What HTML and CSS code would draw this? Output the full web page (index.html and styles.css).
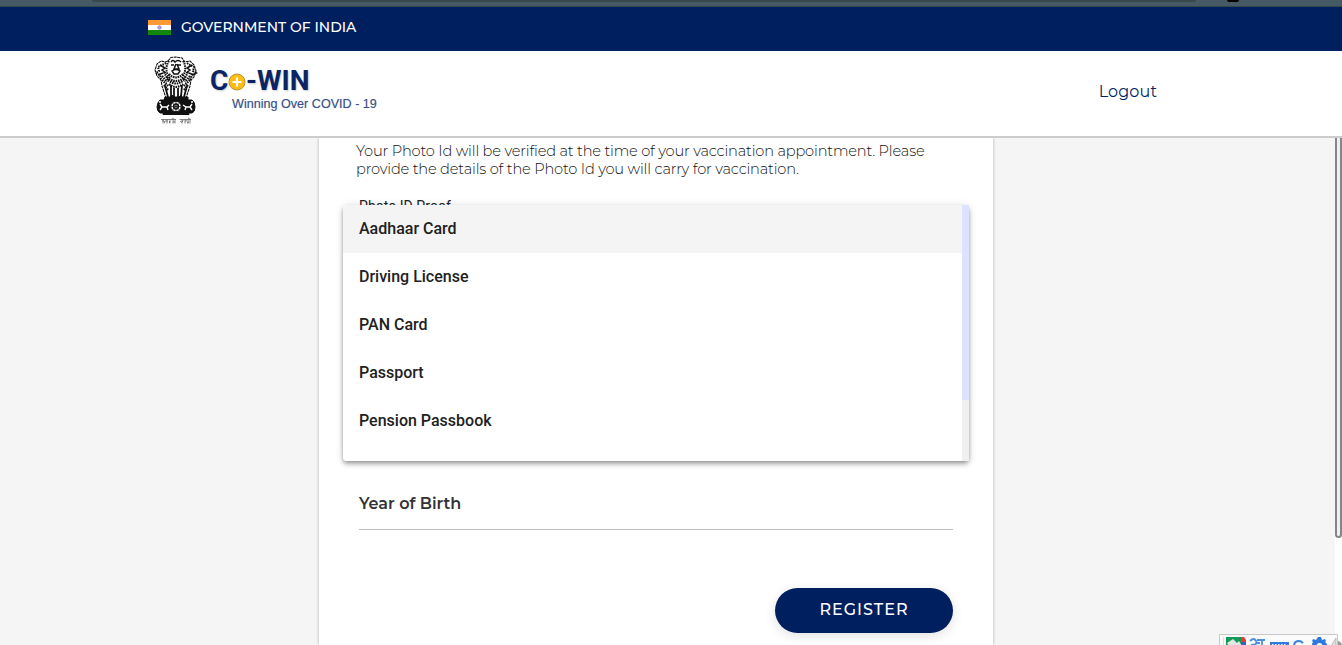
FILE: index.html
```html
<!DOCTYPE html>
<html lang="en">
<head>
<meta charset="utf-8">
<title>Co-WIN</title>
<link rel="stylesheet" href="styles.css">
</head>
<body>
<div class="page">
  <div class="browser-edge"><span class="address-bar"></span><span class="edge-mark"></span></div>
  <div class="gov-bar">
    <svg class="flag" width="23" height="15" viewBox="0 0 23 15"><path fill="#ff9933" d="M0 0h23v5H0z"/><path fill="#fff" d="M0 5h23v5H0z"/><path fill="#138808" d="M0 10h23v5H0z"/><circle cx="11.5" cy="7.5" r="1.8" fill="#a9a9dc" stroke="#7777bd" stroke-width=".6"/></svg>
    <span class="gov-label">GOVERNMENT OF INDIA</span>
  </div>
  <header class="header">
    <div class="brand">
      <svg class="emblem" width="44" height="70" viewBox="0 0 44 70" fill="none" stroke="#111" stroke-width="1">
        <path fill="#fff" stroke-width="1.1" stroke-dasharray="3 .6" d="M14 5 17 1.500 22 1 28 2 31 6 36 5 40 9 42 15 40 21 37 24 36 30 32 42H12L8 30 7 24 3 20 1 14 3 8 7 5 11 6z"/>
        <path stroke-width="2" stroke-dasharray="1.500 .9" d="M15 5C11 11 12 17 16 22M29 5c4 6 2 12-1 17M12 7 8 9l-4 2 1 4-3 2 4 2 1 4M33 7l3 2 4 2-1 4 3 2-4 2-2 5"/>
        <path stroke-width="1.500" d="M17 6q2-3 4 0 3-3 6 0M17 9h3M24 9h3M22 8l-2 5h5l-2-5M18 15q4-3 8 0l-2 3h-4zM6 9l5 3-3 2 4 3M38 9l-5 3 3 2-4 3M4 19l5-2M40 19l-5-2"/>
        <path stroke-width="2.200" stroke-dasharray="1.600 .8" d="M15 18q7 7 14 0M13 21q9 8 18 0M14 24q8 7 16 0M15 28q7 6 14 0M8 20l5 6M8 24l6 6M10 29l4 5M36 20l-5 6M36 24l-6 6M34 29l-4 5M10 16l4 8M34 16l-4 8"/>
        <path stroke-width="1.800" d="M11 30l3 11M17 29v12M20 32v9M24 32v9M28 29l-1 12M33 30l-3 11"/>
        <path fill="#111" d="M11 41h6l1-2 2 2h5l2-2 1 2h6v3H10z"/>
        <path fill="#111" d="M6 44h32q3 2 3 7t-3 6H6q-3-2-3-6t3-7z"/>
        <circle cx="22" cy="50.500" r="5.200" fill="#fff"/><circle cx="22" cy="50.500" r="2.400" stroke-width="1.500"/><path stroke-width=".7" d="M17 50.500h10M22 45.500v10M18.500 47l7 7M25.500 47l-7 7"/>
        <path stroke="#fff" stroke-width="1.400" d="M6 48l2 3h5l2-2M8 51l-2 3M13 51l1 3M29 49l3 2h4l2-3M32 51l-1 3M36 51l2 3M5 46h2M37 46h2"/>
        <path fill="#111" d="M9 57.500h26v1H9z"/>
        <g stroke="#555" stroke-width=".7"><path d="M7 63.500h15M25.500 63.500H37M9 63.500v4M8 65h2q2 1 0 2M13 63.500v4M11 65h3M16 63.500v4M16 65q-2 1 0 2M19 63.500v4M18 62l2 1M21 63.500v4M19 66h2M28 63.500v4M26 65q2 3 3-1M31 63.500v4M31 65h2M34 63.500v4M36 63.500v4M33 67l2-1M34 62l2 1"/></g>
      </svg>
      <div class="logo">
        <div class="logo-name"><span class="c">C</span><svg class="plus" width="18" height="18" viewBox="0 0 18 18"><circle cx="9" cy="9" r="8" fill="#fdbd12" stroke="#b9943d" stroke-width="1"/><path d="M9 4.500v9M4.500 9h9" stroke="#fff" stroke-width="2.200"/></svg><span class="win">-WIN</span></div>
        <div class="tagline">Winning Over COVID - 19</div>
      </div>
    </div>
    <a class="logout">Logout</a>
  </header>
  <main class="main">
    <section class="card">
      <p class="intro">Your Photo Id will be verified at the time of your vaccination appointment. Please<br>provide the details of the Photo Id you will carry for vaccination.</p>
      <div class="select-field">
        <label class="field-label">Photo ID Proof</label>
        <div class="options">
          <ul class="option-list"><li class="active">Aadhaar Card</li><li>Driving License</li><li>PAN Card</li><li>Passport</li><li>Pension Passbook</li></ul>
          <div class="options-track"><div class="options-thumb"></div></div>
        </div>
      </div>
      <div class="year-field"><span class="year-label">Year of Birth</span></div>
      <button class="register"><span>REGISTER</span></button>
    </section>
    <div class="page-track"><div class="page-thumb"></div></div>
  </main>
  <svg class="ime" width="123" height="12" viewBox="0 0 123 12">
    <path fill="#fbfbfb" stroke="#c9c9c9" d="M.5 13V.5h118V13"/><path stroke="#ddd" d="M4.500 3v9"/>
    <path fill="#109b58" d="M7 3h15v9H7z"/><path fill="#e33b32" d="M22 3h3l2 3v3h-5z"/><path fill="#2e65c8" d="M22 8h5v4h-5z"/><path fill="#e5e5e5" d="M8 9l6-4 4 4 2-2 3 5H10z"/>
    <path fill="none" stroke="#4a90dd" stroke-width="1.800" d="M31 7q4-4 6 0t-5 4M37 9h4M38 6h8M43 6v6"/>
    <path fill="#3179df" d="M51 8h19v4H51z"/><path stroke="#fff" stroke-dasharray="1.500 1.500" d="M53 10.500h15"/>
    <path fill="none" stroke="#3b83e1" stroke-width="2" d="M75 12q0-5 5-5 2 0 4 2"/>
    <path fill="#3179df" d="M94 8l-1-1 1-2 3 1 2-3h3l1 3 3-1 1 2-1 1 2 2v2H93v-2z"/><circle cx="100.500" cy="12" r="3" fill="#fff"/>
    <path fill="#ddd" stroke="#aaa" stroke-width=".7" d="M112 12l5-8v8z"/><path fill="#999" d="M119 7q4 1 4 5h-4z"/>
  </svg>
</div>
</body>
</html>
```
FILE: styles.css
```css
* { box-sizing: border-box; }
body { margin: 0; font-family: Montserrat, Inter, sans-serif; background: #f5f5f5; }
.page { position: relative; width: 1342px; height: 645px; overflow: hidden; display: flex; flex-direction: column; }
.browser-edge { height: 7px; flex: none; background: #455a64; border-bottom: 1px solid #37474f; display: flex; padding-left: 92px; }
.address-bar { width: 1104px; height: 2px; background: #37474a; border-radius: 0 0 9px 9px; }
.edge-mark { width: 12px; height: 2px; margin-left: 31px; background: #000; border-radius: 0 0 4px 4px; }
.gov-bar { height: 44px; flex: none; background: #001f5f; display: flex; align-items: flex-start; padding: 13px 0 0 148px; gap: 10px; color: #fff; }
.gov-label { font-size: 14px; line-height: 15px; font-weight: 500; white-space: nowrap; }
.header { height: 87px; flex: none; background: #fff; border-bottom: 2px solid #ccc; display: flex; justify-content: space-between; padding: 5px 185px 0 154px; }
.brand { display: flex; gap: 12px; }
.logo { padding-top: 11px; font-family: Roboto, sans-serif; }
.logo-name { display: flex; height: 27px; line-height: 28px; font-size: 28px; font-weight: 700; color: #0b2564; text-shadow: 1px 1px 2px #ccc; }
.c { width: 18px; }
.plus { margin: 6px 0 0; }
.tagline { padding: 1px 0 0 22px; font: 12.6px/18px "Liberation Sans", sans-serif; color: #3a5086; text-shadow: 0 0 1px #b7c0d5; white-space: nowrap; }
.logout { font-size: 16px; line-height: 20px; padding-top: 26px; letter-spacing: .12px; color: #001f5f; }
.main { flex: 1; display: flex; justify-content: space-between; padding-left: 319px; min-height: 0; }
.card { width: 674px; background: #fff; box-shadow: 0 0 3px rgba(0,0,0,.3); clip-path: inset(0 -5px); display: flex; flex-direction: column; padding: 4px 40px 0; }
.intro { margin: 0 -3px; height: 54px; font-size: 14.6px; line-height: 18px; letter-spacing: -.17px; font-weight: 300; color: #111; white-space: nowrap; }
.select-field { position: relative; height: 265px; font-family: Roboto, sans-serif; }
.field-label { display: block; padding-top: 1px; font-size: 14px; line-height: 18px; letter-spacing: .05px; color: #222; font-weight: 400; }
.options { position: absolute; left: -16px; top: 9px; width: 626px; height: 256px; background: #fff; display: flex; overflow: hidden; border-radius: 4px 0 0 4px; }
.select-field::before { content: ""; position: absolute; left: -16px; top: 9px; width: 626px; height: 256px; border-radius: 4px; box-shadow: 0 2px 4px -1px rgba(0,0,0,.35), 0 4px 5px rgba(0,0,0,.14), 0 1px 10px rgba(0,0,0,.12); }
.option-list { flex: 1; margin: 0; padding: 0; list-style: none; }
.option-list li { height: 48px; line-height: 48px; padding-left: 16px; font-size: 16px; font-weight: 500; color: #212121; }
.option-list .active { background: #f4f4f4; }
.options-track { width: 7px; background: #f0f0f0; }
.options-thumb { height: 195px; background: #dce2ff; }
.year-field { height: 69px; flex: none; border-bottom: 1px solid #bdbdbd; padding-top: 33px; font-size: 16px; line-height: 20px; font-weight: 600; color: #333; }
.register { align-self: flex-end; margin-top: 58px; width: 178px; height: 45px; flex: none; border: 0; border-radius: 23px; background: #001f5f; color: #fff; font: 500 16px/20px Montserrat, Inter, sans-serif; letter-spacing: 1px; box-shadow: 0 3px 12px rgba(0,0,0,.12); padding: 0 0 2px; }
.page-track { width: 7px; background: #fff; }
.page-thumb { height: 400px; border: 2px solid #858589; border-top: 0; border-radius: 0 0 4px 4px; background: #eeeef6; }
.ime { position: absolute; left: 1219px; top: 634px; }
```
